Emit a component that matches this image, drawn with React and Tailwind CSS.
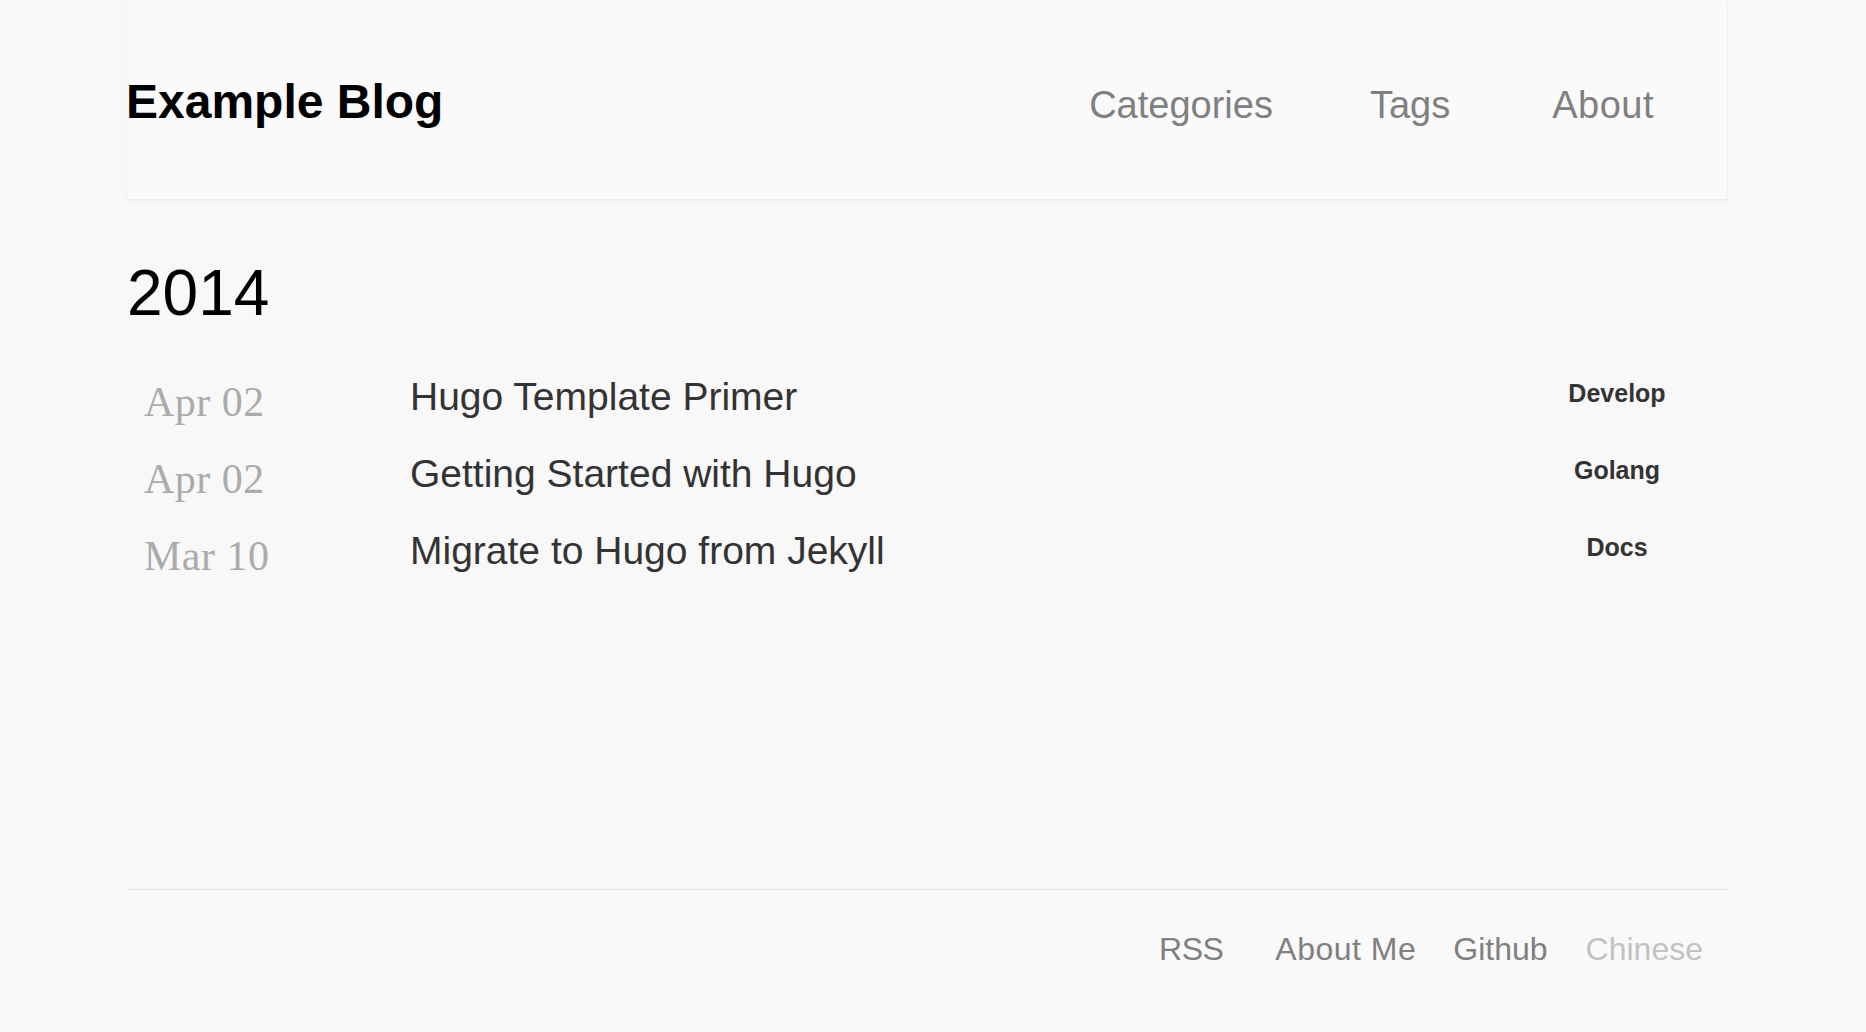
// App.jsx
import React from 'react';

const posts = [
  { date: 'Apr 02', title: 'Hugo Template Primer', tag: 'Develop' },
  { date: 'Apr 02', title: 'Getting Started with Hugo', tag: 'Golang' },
  { date: 'Mar 10', title: 'Migrate to Hugo from Jekyll', tag: 'Docs' },
];

const sans = "font-['Liberation_Sans',Arial,sans-serif]";

const App = () => {
  return (
    <div className={`h-screen bg-[#f8f8f8] flex flex-col overflow-hidden ${sans}`}>
      {/* header */}
      <header className="ml-[127px] w-[1600px] h-[199px] shrink-0 bg-[#fafafa] shadow-[0_1px_2px_rgba(0,0,0,0.08)] flex items-baseline justify-between pt-[78px]">
        <a href="#" className="text-[48px] leading-[48px] font-bold text-black -ml-[1px]">
          Example Blog
        </a>
        <nav className="flex items-baseline pr-[73px] text-[38px] leading-[38px] text-[#808080]">
          <a href="#">Categories</a>
          <a href="#" className="ml-[97px]">Tags</a>
          <a href="#" className="ml-[102px] tracking-[0.5px]">About</a>
        </nav>
      </header>

      {/* main */}
      <main className="ml-[127px] w-[1600px] flex-1">
        <h2 className="mt-[62px] text-[64px] leading-[64px] text-black">2014</h2>

        <ul className="mt-[53px]">
          {posts.map((post) => (
            <li key={post.title} className="h-[77px] flex items-start">
              <span className="mt-[3px] pl-[17px] w-[283px] shrink-0 font-['Liberation_Serif','Times_New_Roman',serif] text-[42px] leading-[42px] tracking-[0.5px] text-[#ababab]">
                {post.date}
              </span>
              <a href="#" className="flex-1 text-[39px] leading-[38px] text-[#333]">
                {post.title}
              </a>
              <span className="mt-[3px] w-[166px] mr-[27px] text-center text-[25px] leading-[25px] font-bold text-[#333]">
                {post.tag}
              </span>
            </li>
          ))}
        </ul>
      </main>

      {/* footer */}
      <footer className="ml-[128px] w-[1600px] h-[143px] shrink-0 bg-[#f9f9f9] border-t border-[#e6e6e6]">
        <div className="flex justify-end pt-[43px] pr-[25px] text-[32px] leading-[32px] text-[#808080]">
          <a href="#" className="tracking-[-0.5px]">RSS</a>
          <a href="#" className="ml-[52px] tracking-[0.5px]">About Me</a>
          <a href="#" className="ml-[37px]">Github</a>
          <a href="#" className="ml-[38px] text-[#c2c2c2]">Chinese</a>
        </div>
      </footer>
    </div>
  );
};

export default App;
